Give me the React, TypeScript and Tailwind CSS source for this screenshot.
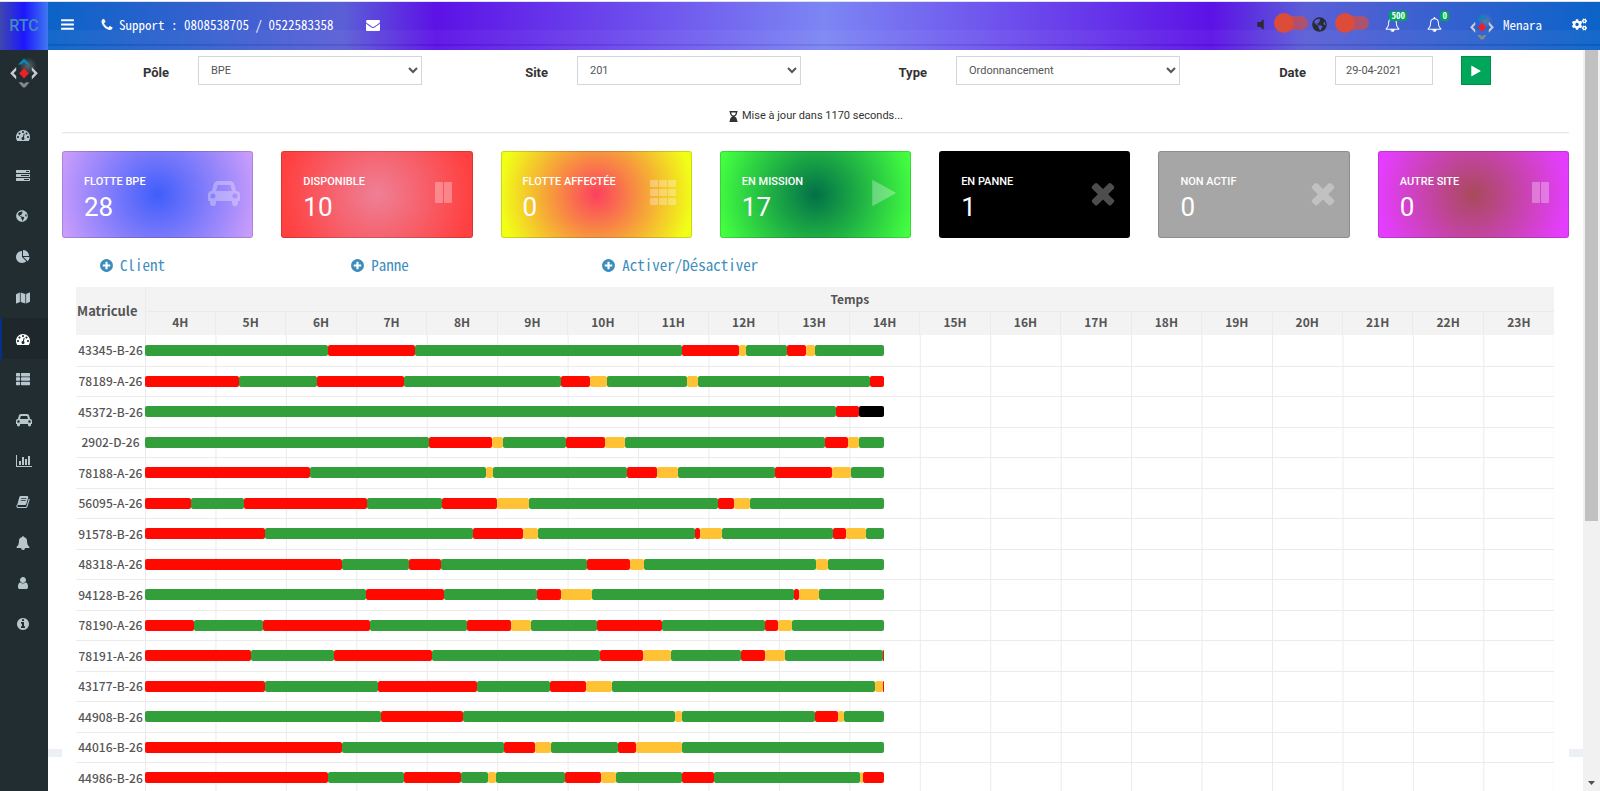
import React from "react";
import {
  FaCogs,
  FaGlobeAmericas,
  FaHourglassEnd,
  FaMap,
  FaThList,
  FaVolumeOff,
} from "react-icons/fa";

const MONO = "font-['Noto_Sans_Mono_CJK_SC','Liberation_Mono',monospace]";

const CIRCLE =
  "q0 209-103 385.5t-279.5 279.5-385.5 103-385.5-103-279.5-279.5-103-385.5 103-385.5 279.5-279.5 385.5-103 385.5 103 279.5 279.5 103 385.5z";
const BELL_EDGE =
  "q0 52-38 90t-90 38h-448q0 106-75 181t-181 75-181-75-75-181h-448q-52 0-90-38t-38-90q50-42 91-88t85-119.5 74.5-158.5 50-206 19.5-260q0-152 117-282.5t307-158.5q-8-19-8-39 0-40 28-68t68-28 68 28 28 68q0 20-8 39 190 28 307 158.5t117 282.5q0 139 19.5 260t50 206 74.5 158.5 85 119.5 91 88z";
const BELL_CLAPPER =
  "M912 1696q0-16-16-16-59 0-101.5-42.5t-42.5-101.5q0-16-16-16t-16 16q0 73 51.5 124.5t124.5 51.5q16 0 16-16z";

const PATHS = {
  gauge:
    "M384 1152q0-53-37.5-90.5t-90.5-37.5-90.5 37.5-37.5 90.5 37.5 90.5 90.5 37.5 90.5-37.5 37.5-90.5zm192-448q0-53-37.5-90.5t-90.5-37.5-90.5 37.5-37.5 90.5 37.5 90.5 90.5 37.5 90.5-37.5 37.5-90.5zm428 481l101-382q6-26-7.5-48.5t-38.5-29.5-48 6.5-30 39.5l-101 382q-60 5-107 43.5t-63 98.5q-20 77 20 146t117 89 146-20 89-117q16-60-6-117t-72-91zm660-33q0-53-37.5-90.5t-90.5-37.5-90.5 37.5-37.5 90.5 37.5 90.5 90.5 37.5 90.5-37.5 37.5-90.5zm-640-640q0-53-37.5-90.5t-90.5-37.5-90.5 37.5-37.5 90.5 37.5 90.5 90.5 37.5 90.5-37.5 37.5-90.5zm448 192q0-53-37.5-90.5t-90.5-37.5-90.5 37.5-37.5 90.5 37.5 90.5 90.5 37.5 90.5-37.5 37.5-90.5zm320 448q0 261-141 483-19 29-54 29h-1402q-35 0-54-29-141-221-141-483 0-182 71-348t191-286 286-191 348-71 348 71 286 191 191 286 71 348z",
  tasks:
    "M1024 1408h640v-128h-640v128zm-384-512h1024v-128h-1024v128zm640-512h384v-128h-384v128zm512 832v256q0 26-19 45t-45 19h-1664q-26 0-45-19t-19-45v-256q0-26 19-45t45-19h1664q26 0 45 19t19 45zm0-512v256q0 26-19 45t-45 19h-1664q-26 0-45-19t-19-45v-256q0-26 19-45t45-19h1664q26 0 45 19t19 45zm0-512v256q0 26-19 45t-45 19h-1664q-26 0-45-19t-19-45v-256q0-26 19-45t45-19h1664q26 0 45 19t19 45z",
  pie: "M768 890l546 546q-106 108-247.5 168t-298.5 60q-209 0-385.5-103t-279.5-279.5-103-385.5 103-385.5 279.5-279.5 385.5-103v762zm187 6h773q0 157-60 298.5t-168 247.5zm709-128h-768v-768q209 0 385.5 103t279.5 279.5 103 385.5z",
  bell: BELL_CLAPPER + "m816-288" + BELL_EDGE,
  bellOutline:
    BELL_CLAPPER +
    "m-666-288h1300q-266-300-266-832 0-51-24-105t-69-103-121.5-80.5-169.5-31.5-169.5 31.5-121.5 80.5-69 103-24 105q0 532-266 832zm1482 0" +
    BELL_EDGE,
  user: "M1536 1399q0 109-62.5 187t-150.5 78h-854q-88 0-150.5-78t-62.5-187q0-85 8.5-160.5t31.5-152 58.5-131 94-89 134.5-34.5q131 128 313 128t313-128q76 0 134.5 34.5t94 89 58.5 131 31.5 152 8.5 160.5zm-256-887q0 159-112.5 271.5t-271.5 112.5-271.5-112.5-112.5-271.5 112.5-271.5 271.5-112.5 271.5 112.5 112.5 271.5z",
  info:
    "M1152 1376v-160q0-14-9-23t-23-9h-96v-512q0-14-9-23t-23-9h-320q-14 0-23 9t-9 23v160q0 14 9 23t23 9h96v320h-96q-14 0-23 9t-9 23v160q0 14 9 23t23 9h448q14 0 23-9t9-23zm-128-896v-160q0-14-9-23t-23-9h-192q-14 0-23 9t-9 23v160q0 14 9 23t23 9h192q14 0 23-9t9-23zm640 416" +
    CIRCLE,
  plus:
    "M1344 960v-128q0-26-19-45t-45-19h-256v-256q0-26-19-45t-45-19h-128q-26 0-45 19t-19 45v256h-256q-26 0-45 19t-19 45v128q0 26 19 45t45 19h256v256q0 26 19 45t45 19h128q26 0 45-19t19-45v-256h256q26 0 45-19t19-45zm320-64" +
    CIRCLE,
  phone:
    "M1600 1240q0 27-10 70.5t-21 68.5q-21 50-122 106-94 51-186 51-27 0-53-3.5t-57.5-12.5-47-14.5-55.5-20.5-49-18q-98-35-175-83-127-79-264-216t-216-264q-48-77-83-175-3-9-18-49t-20.5-55.5-14.5-47-12.5-57.5-3.5-53q0-92 51-186 56-101 106-122 25-11 68.5-21t70.5-10q14 0 21 3 18 6 53 76 11 19 30 54t35 63.5 31 53.5q3 4 17.5 25t21.5 35.5 7 28.5q0 20-28.5 50t-62 55-62 53-28.5 46q0 9 5 22.5t8.5 20.5 14 24 11.5 19q76 137 174 235t235 174q2 1 19 11.5t24 14 20.5 8.5 22.5 5q18 0 46-28.5t53-62 55-62 50-28.5q14 0 28.5 7t35.5 21.5 25 17.5q25 15 53.5 31t63.5 35 54 30q70 35 76 53 3 7 3 21z",
  envelope:
    "M1792 710v794q0 66-47 113t-113 47h-1472q-66 0-113-47t-47-113v-794q44 49 101 87 362 246 497 345 57 42 92.5 65.5t94.5 48 110 24.5h2q51 0 110-24.5t94.5-48 92.5-65.5q170-123 498-345 57-39 100-87zm0-294q0 79-49 151t-122 123q-376 261-468 325-10 7-42.5 31t-54 38.5-52 32.5-57.5 27-50 9h-2q-23 0-50-9t-57.5-27-52-32.5-54-38.5-42.5-31q-91-64-262-182.5t-205-142.5q-62-42-117-115.5t-55-136.5q0-78 41.5-130t118.5-52h1472q65 0 112.5 47t47.5 113z",
  times:
    "M1490 1322q0 40-28 68l-136 136q-28 28-68 28t-68-28l-294-294-294 294q-28 28-68 28t-68-28l-136-136q-28-28-28-68t28-68l294-294-294-294q-28-28-28-68t28-68l136-136q28-28 68-28t68 28l294 294 294-294q28-28 68-28t68 28l136 136q28 28 28 68t-28 68l-294 294 294 294q28 28 28 68z",
  play: "M1576 927l-1328 738q-23 13-39.5 3t-16.5-36v-1472q0-26 16.5-36t39.5 3l1328 738q23 13 23 31t-23 31z",
  bars: "M1664 1344v128q0 26-19 45t-45 19h-1408q-26 0-45-19t-19-45v-128q0-26 19-45t45-19h1408q26 0 45 19t19 45zm0-512v128q0 26-19 45t-45 19h-1408q-26 0-45-19t-19-45v-128q0-26 19-45t45-19h1408q26 0 45 19t19 45zm0-512v128q0 26-19 45t-45 19h-1408q-26 0-45-19t-19-45v-128q0-26 19-45t45-19h1408q26 0 45 19t19 45z",
};

function Glyph({ name, className }: { name: keyof typeof PATHS; className: string }) {
  return (
    <svg viewBox="0 0 1792 1792" fill="currentColor" className={className} aria-hidden="true">
      <path d={PATHS[name]} />
    </svg>
  );
}

function CarIcon({ className }: { className: string }) {
  return (
    <svg viewBox="0 0 2048 1792" fill="currentColor" className={className} aria-hidden="true">
      <path d="M480 1088q0-66-47-113t-113-47-113 47-47 113 47 113 113 47 113-47 47-113zm36-320h1016l-89-357q-2-8-14-17.5t-21-9.5h-768q-9 0-21 9.5t-14 17.5zm1372 320q0-66-47-113t-113-47-113 47-47 113 47 113 113 47 113-47 47-113zm160-96v384q0 14-9 23t-23 9h-96v128q0 80-56 136t-136 56-136-56-56-136v-128h-1024v128q0 80-56 136t-136 56-136-56-56-136v-128h-96q-14 0-23-9t-9-23v-384q0-93 65.5-158.5t158.5-65.5h28l105-419q23-94 104-157.5t179-63.5h768q98 0 179 63.5t104 157.5l105 419h28q93 0 158.5 65.5t65.5 158.5z" />
    </svg>
  );
}

function ChartIcon({ className }: { className: string }) {
  return (
    <svg viewBox="0 0 2048 1792" fill="currentColor" className={className} aria-hidden="true">
      <path d="M640 896v512h-256v-512h256zm384-512v1024h-256v-1024h256zm1024 1152v128h-2048v-1536h128v1408h1920zm-640-896v768h-256v-768h256zm384-384v1152h-256v-1152h256z" />
    </svg>
  );
}

function BookIcon({ className }: { className: string }) {
  return (
    <svg viewBox="0 0 14 14" className={className} aria-hidden="true">
      <path
        d="M4.6 1H11.4Q12.6 1.2 12.2 2.4L10.2 9.2Q9.9 10 9 10H1.2L3.4 2Q3.7 1 4.6 1Z M5.3 3.1L5.1 3.8H10.2L10.4 3.1Z M4.8 5L4.6 5.7H9.7L9.9 5Z"
        fill="currentColor"
        fillRule="evenodd"
      />
      <path
        d="M1.2 10Q0.5 12.5 2 12.5H9.6Q10.6 12.5 10.9 11.6L13.3 3.8"
        fill="none"
        stroke="currentColor"
        strokeWidth="1.1"
      />
    </svg>
  );
}

function PauseIcon({ className }: { className: string }) {
  return (
    <svg viewBox="0 0 17 21" fill="currentColor" className={className} aria-hidden="true">
      <rect x="0" y="0" width="8" height="21" rx="1" />
      <rect x="9" y="0" width="8" height="21" rx="1" />
    </svg>
  );
}

function GridIcon({ className }: { className: string }) {
  return (
    <svg viewBox="0 0 26 25" fill="currentColor" className={className} aria-hidden="true">
      {[0, 9, 18].map((y) =>
        [0, 9, 18].map((x) => <rect key={`${x}-${y}`} x={x} y={y} width="8" height="7" rx="1" />),
      )}
    </svg>
  );
}

function BrandMark({ className }: { className: string }) {
  return (
    <svg viewBox="0 0 28 30" className={className} aria-hidden="true">
      <defs>
        <radialGradient id="halo" cx="0.5" cy="0.5" r="0.5">
          <stop offset="0" stopColor="#7d8a90" stopOpacity="0.6" />
          <stop offset="1" stopColor="#7d8a90" stopOpacity="0" />
        </radialGradient>
      </defs>
      <circle cx="18" cy="8" r="9" fill="url(#halo)" />
      <path d="M14 0.5L20 6.5H16.5L14 4.5L11.5 6.5H8Z" fill="#0a86b8" />
      <path d="M6.2 9V12.5L3.6 15.3L6.2 18V21.5L0.2 15.3Z" fill="#c9cdce" />
      <path d="M21.8 9V12.5L24.4 15.3L21.8 18V21.5L27.8 15.3Z" fill="#c9cdce" />
      <path d="M8.5 24.2H12L14 26L16 24.2H19.5L15.5 29Q14 30 12.5 29Z" fill="#85898a" />
      <path d="M14 10.2L18.8 15.3L14 20.6L9.2 15.3Z" fill="#f01f26" />
    </svg>
  );
}

const SIDE = "size-[14px]";
const NAV: { label: string; icon: React.ReactNode; active?: boolean }[] = [
  { label: "Tableau de bord", icon: <Glyph name="gauge" className={SIDE} /> },
  { label: "Tâches", icon: <Glyph name="tasks" className={SIDE} /> },
  { label: "Géolocalisation", icon: <FaGlobeAmericas className="size-3" /> },
  { label: "Statistiques", icon: <Glyph name="pie" className={SIDE} /> },
  { label: "Carte", icon: <FaMap className={SIDE} /> },
  { label: "Suivi", icon: <Glyph name="gauge" className={SIDE} />, active: true },
  { label: "Listes", icon: <FaThList className={SIDE} /> },
  { label: "Véhicules", icon: <CarIcon className="h-[14px] w-4" /> },
  { label: "Rapports", icon: <ChartIcon className="h-[14px] w-4" /> },
  { label: "Journal", icon: <BookIcon className={SIDE} /> },
  { label: "Alertes", icon: <Glyph name="bell" className={SIDE} /> },
  { label: "Utilisateurs", icon: <Glyph name="user" className={SIDE} /> },
  { label: "Informations", icon: <Glyph name="info" className={SIDE} /> },
];

const CARDS = [
  {
    title: "FLOTTE BPE",
    value: 28,
    bg: "bg-[radial-gradient(circle,#3f5efb_0%,#cf9ffb_100%)]",
    icon: <CarIcon className="h-7 w-8" />,
  },
  {
    title: "DISPONIBLE",
    value: 10,
    bg: "bg-[radial-gradient(circle,#ee8096_0%,#ff4040_90%)]",
    icon: <PauseIcon className="h-[21px] w-[17px]" />,
  },
  {
    title: "FLOTTE AFFECTÉE",
    value: 0,
    bg: "bg-[radial-gradient(circle,#fc4060_0%,#f1ff16_92%)]",
    icon: <GridIcon className="h-[25px] w-[26px]" />,
  },
  {
    title: "EN MISSION",
    value: 17,
    bg: "bg-[radial-gradient(circle,#027048_0%,#43ff40_95%)]",
    icon: <Glyph name="play" className="ml-1 size-[30px] shrink-0" />,
  },
  {
    title: "EN PANNE",
    value: 1,
    bg: "bg-black",
    icon: <Glyph name="times" className="ml-1 size-[34px] shrink-0" />,
  },
  {
    title: "NON ACTIF",
    value: 0,
    bg: "bg-[#a6a6a6]",
    icon: <Glyph name="times" className="ml-1 size-[34px] shrink-0" />,
  },
  {
    title: "AUTRE SITE",
    value: 0,
    bg: "bg-[radial-gradient(circle,#a94a5a_0%,#e53dff_92%)]",
    icon: <PauseIcon className="h-[21px] w-[17px]" />,
  },
];

const HOURS = Array.from({ length: 20 }, (_, i) => `${i + 4}H`);

// Each segment is a state letter and its end on an axis of AXIS units (4H to 24H).
const AXIS = 1409;
const COLORS: Record<string, string> = {
  G: "bg-[#329f3a]",
  R: "bg-[#ff0900]",
  Y: "bg-[#ffc235]",
  K: "bg-black",
};
const ROWS: [string, string][] = [
  ["43345-B-26", "G183 R270 G537 R594 Y601 G642 R661 Y670 G739"],
  ["78189-A-26", "R94 G172 R259 G416 R445 Y462 G542 Y553 G725 R739"],
  ["45372-B-26", "G691 R714 K739"],
  ["2902-D-26", "G284 R347 Y358 G421 R460 Y480 G680 R703 Y714 G739"],
  ["78188-A-26", "R165 G341 Y348 G482 R512 Y533 G630 R687 Y706 G739"],
  ["56095-A-26", "R46 G99 R222 G297 R352 Y384 G573 R589 Y605 G739"],
  ["91578-B-26", "R120 G328 R378 Y393 G550 R555 Y577 G688 R701 Y721 G739"],
  ["48318-A-26", "R197 G264 R296 G442 R485 Y499 G671 Y683 G739"],
  ["94128-B-26", "G221 R299 G392 R416 Y447 G649 R654 Y674 G739"],
  ["78190-A-26", "R49 G118 R225 G322 R366 Y386 G452 R517 G620 R633 Y647 G739"],
  ["78191-A-26", "R106 G189 R287 G455 R498 Y526 G596 R620 Y640 G738 R739"],
  ["43177-B-26", "R120 G233 R332 G405 R441 Y467 G730 Y738 R739"],
  ["44908-B-26", "G236 R318 G530 Y537 G670 R693 Y699 G739"],
  ["44016-B-26", "R197 G359 R390 Y406 G473 R491 Y537 G739"],
  ["44986-B-26", "R183 G259 R316 G343 Y351 G420 R456 Y471 G537 R569 G715 Y718 R739"],
];

function Timeline({ spec }: { spec: string }) {
  let start = 0;
  return (
    <div className="flex h-[11px]">
      {spec.split(" ").map((part) => {
        const end = Number(part.slice(1));
        const width = ((end - start) / AXIS) * 100;
        start = end;
        return (
          <span
            key={part}
            className={`rounded-[2px] ${COLORS[part[0]]}`}
            style={{ width: `${width}%` }}
          />
        );
      })}
    </div>
  );
}

function Toggle({ label }: { label: string }) {
  return (
    <label className="relative block h-5 w-[34px]">
      <input type="checkbox" aria-label={label} className="peer absolute inset-0 z-10 m-0 opacity-0" />
      <span className="absolute top-[3px] right-0 h-[14px] w-7 rounded-full bg-[#dd4b39]/65" />
      <span className="absolute top-0 left-0 size-5 rounded-full bg-[#dd4b39] peer-checked:left-[14px]" />
    </label>
  );
}

function BellButton({ count, className }: { count: number; className: string }) {
  return (
    <button type="button" aria-label={`Notifications ${count}`} className={`relative ${className}`}>
      <Glyph name="bellOutline" className="size-[15px]" />
      <span className="absolute -top-[6px] -right-[7px] rounded-[3px] bg-[#00a65a] px-[2px] text-[9px] leading-[10px] font-bold">
        {count}
      </span>
    </button>
  );
}

function SelectField({ id, label, value }: { id: string; label: string; value: string }) {
  return (
    <div className="flex items-center">
      <label htmlFor={id} className="w-[107px] pt-1 text-right text-[13px] font-bold text-[#333]">
        {label}
      </label>
      <select
        id={id}
        defaultValue={value}
        className="ml-[29px] h-[29px] w-56 border border-[#d2d6de] bg-white px-2 text-[11px] text-[#555]"
      >
        <option>{value}</option>
      </select>
    </div>
  );
}

export default function App() {
  return (
    <div className="flex h-screen flex-col overflow-hidden bg-white font-['Roboto',sans-serif] text-[#333]">
      <div className="h-[2px] shrink-0 border-b border-[#dee1e6]" />
      <header className={`flex h-12 shrink-0 text-[13px] text-white ${MONO}`}>
        <a
          href="#"
          className="flex w-12 shrink-0 items-center justify-center bg-[linear-gradient(to_right,#3f48ae,#1c16fe_50%,#4078f0)] pb-px font-['Roboto',sans-serif] text-base font-medium text-[#3c8dbc]"
        >
          RTC
        </a>
        <nav className="flex grow items-center bg-[linear-gradient(to_bottom,transparent_28px,rgba(255,255,255,0.04)_28px,rgba(255,255,255,0.04)_42px,rgba(0,0,0,0.06)_42px,rgba(0,0,0,0.06)_44px,rgba(255,255,255,0.04)_44px),linear-gradient(to_right,#0b63c8,#5b5fd6_19%,#5d12e6_25%,#7c86f3_50%,#5d12e6_75%,#5b5fd6_81%,#0b63c8)] pr-[13px] pb-[3px] pl-3">
          <button type="button" aria-label="Menu">
            <Glyph name="bars" className="size-[15px]" />
          </button>
          <a href="tel:0808538705" className="ml-[25px] flex items-center gap-[5px]">
            <Glyph name="phone" className="size-[14px]" />
            Support : 0808538705 / 0522583358
          </a>
          <button type="button" aria-label="Messages" className="ml-8">
            <Glyph name="envelope" className="size-[14px]" />
          </button>
          <div className="ml-auto flex items-center">
            <FaVolumeOff className="size-[13px] text-[#2b2b33]" />
            <div className="ml-[7px] pb-[3px]">
              <Toggle label="Son" />
            </div>
            <FaGlobeAmericas className="ml-1 size-[15px] text-[#2b2b33]" />
            <div className="ml-2 pb-[3px]">
              <Toggle label="Carte" />
            </div>
            <BellButton count={500} className="ml-4" />
            <BellButton count={0} className="ml-[27px]" />
            <a href="#" className="ml-[27px] flex items-center gap-2">
              <BrandMark className="mt-1 h-[26px] w-[26px]" />
              Menara
            </a>
            <button type="button" aria-label="Paramètres" className="ml-[30px]">
              <FaCogs className="size-[15px]" />
            </button>
          </div>
        </nav>
      </header>

      <div className="flex min-h-0 grow">
        <aside className="w-12 shrink-0 overflow-hidden bg-[#222d32]">
          <div className="flex h-16 justify-center pt-2">
            <BrandMark className="h-[30px] w-7" />
          </div>
          <nav className="grid h-[530px] grid-rows-13">
            {NAV.map((item) => (
              <a
                key={item.label}
                href="#"
                aria-label={item.label}
                className={`flex items-center border-l-2 pt-px pl-[14px] ${
                  item.active
                    ? "border-[#05308a] bg-[#1e282c] text-white"
                    : "border-transparent text-[#b8c7ce]"
                }`}
              >
                {item.icon}
              </a>
            ))}
          </nav>
        </aside>

        <main className="min-w-0 grow overflow-y-auto bg-[linear-gradient(to_bottom,white_699px,#ecf0f5_699px,#ecf0f5_707px,white_707px)] px-[14px] [scrollbar-width:none]">
          <div className="bg-white">
            <form className="border-b border-[#e8e8e8] pt-[6px] pb-[7px] shadow-[0_1px_1px_rgba(0,0,0,0.03)]">
              <div className="grid grid-cols-4 gap-[9px]">
                <SelectField id="pole" label="Pôle" value="BPE" />
                <SelectField id="site" label="Site" value="201" />
                <SelectField id="type" label="Type" value="Ordonnancement" />
                <div className="flex items-center">
                  <label htmlFor="date" className="w-[107px] pt-1 text-right text-[13px] font-bold text-[#333]">
                    Date
                  </label>
                  <input
                    id="date"
                    type="text"
                    defaultValue="29-04-2021"
                    className="ml-[29px] h-[29px] w-[98px] border border-[#d2d6de] px-[10px] text-[11px] text-[#555]"
                  />
                  <button
                    type="button"
                    aria-label="Lancer"
                    className="ml-7 flex h-[29px] w-[30px] items-center justify-center border border-[#008d4c] bg-[#00a65a] text-white"
                  >
                    <Glyph name="play" className="size-3" />
                  </button>
                </div>
              </div>
              <p className="mt-[22px] flex items-center justify-center gap-[3px] text-[11px] leading-[18px]">
                <FaHourglassEnd className="size-[11px]" />
                Mise à jour dans 1170 seconds...
              </p>
            </form>

            <section className="mt-[18px] grid grid-cols-7 gap-7">
              {CARDS.map((card) => (
                <article
                  key={card.title}
                  className={`flex h-[87px] items-center justify-between rounded-[3px] border border-black/15 bg-origin-border pr-3 pl-[21px] text-white ${card.bg}`}
                >
                  <div className="pt-[7px]">
                    <h3 className="text-[11px] leading-4 font-medium whitespace-nowrap">{card.title}</h3>
                    <p className="mt-px text-[26px] leading-8">{card.value}</p>
                  </div>
                  <div className="mb-1 flex w-8 items-center justify-center text-white/30">{card.icon}</div>
                </article>
              ))}
            </section>

            <div className={`mt-[17px] grid grid-cols-6 text-[15px] leading-5 text-[#3c8dbc] ${MONO}`}>
              {["Client", "Panne", "Activer/Désactiver"].map((text) => (
                <a key={text} href="#" className="flex items-center gap-[6px] pl-[37px] whitespace-nowrap">
                  <Glyph name="plus" className="size-[15px]" />
                  {text}
                </a>
              ))}
            </div>

            <div className="mt-3 pr-[15px] pl-[14px]">
              <table className="w-full table-fixed border-collapse font-['Noto_Sans_CJK_SC',sans-serif] leading-4 text-[#555]">
                <colgroup>
                  <col className="w-[69px]" />
                  {HOURS.map((hour) => (
                    <col key={hour} />
                  ))}
                </colgroup>
                <thead className="bg-[#f3f3f3]">
                  <tr className="h-6">
                    <th rowSpan={2} className="p-0 pr-[6px] text-[13px] font-bold">
                      Matricule
                    </th>
                    <th colSpan={20} className="border-b border-l border-[#ebebeb] p-0 text-xs font-bold">
                      Temps
                    </th>
                  </tr>
                  <tr className="h-6">
                    {HOURS.map((hour) => (
                      <th key={hour} className="border-l border-[#ebebeb] p-0 pb-[3px] text-xs font-bold">
                        {hour}
                      </th>
                    ))}
                  </tr>
                </thead>
                <tbody>
                  {ROWS.map(([plate, spec]) => (
                    <tr key={plate} className="border-b border-[#ebebeb] odd:h-[31px] even:h-[30px]">
                      <th className="p-0 text-xs font-medium whitespace-nowrap">{plate}</th>
                      <td
                        colSpan={20}
                        className="bg-[linear-gradient(to_right,#ebebeb_1px,transparent_1px)] bg-[length:5%_100%] p-0"
                      >
                        <Timeline spec={spec} />
                      </td>
                    </tr>
                  ))}
                </tbody>
              </table>
            </div>
          </div>
        </main>

        <div aria-hidden="true" className="flex w-[17px] shrink-0 flex-col items-center bg-[#f1f1f1] pb-[6px]">
          <div className="h-[471px] w-[13px] bg-[#c1c1c1]" />
          <svg viewBox="0 0 7 4" className="mt-auto h-1 w-[7px]" fill="#505050">
            <path d="M0 0H7L3.5 4Z" />
          </svg>
        </div>
      </div>
    </div>
  );
}
